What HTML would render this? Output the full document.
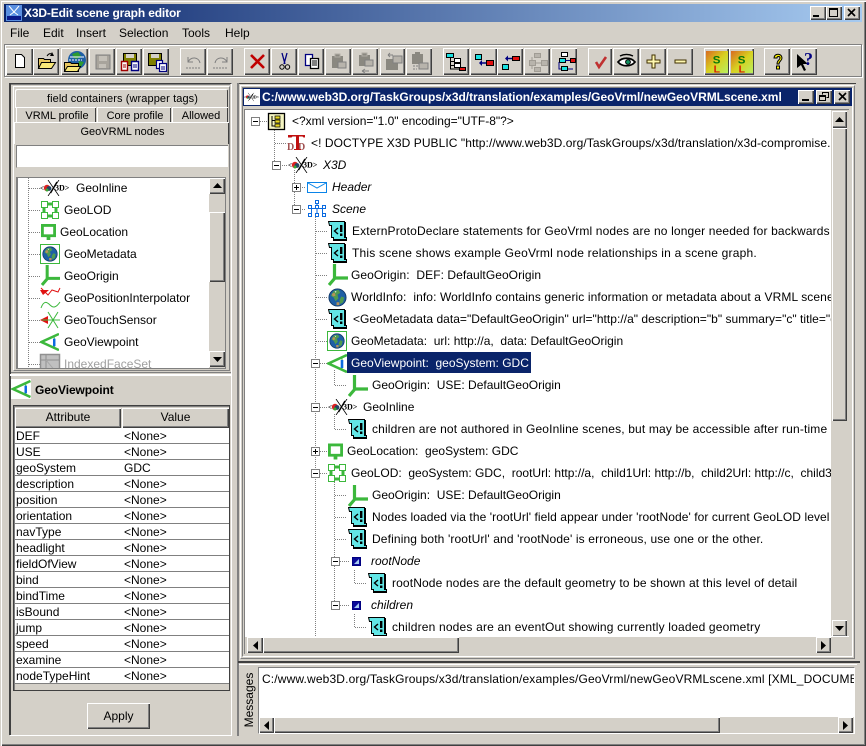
<!DOCTYPE html>
<html><head><meta charset="utf-8"><title>X3D-Edit scene graph editor</title>
<style>
html,body{margin:0;padding:0}
body{width:866px;height:746px;position:relative;overflow:hidden;background:#d4d0c8;font:12px "Liberation Sans",sans-serif;color:#000}
div,span,svg{position:absolute;box-sizing:border-box}
.t{white-space:pre;line-height:16px;height:16px}
.i{font-style:italic}
.b{top:48px;height:27px;background:#d4d0c8;box-shadow:inset 1px 1px #fff,inset -1px -1px #404040,inset -2px -2px #808080}
.b svg{left:2px;top:2px}
.r{background:#d4d0c8;box-shadow:inset 1px 1px #fff,inset -1px -1px #404040,inset -2px -2px #808080}
.m{top:25px}
.w{background:#fff}
.row{left:15px;width:214px;height:16px;background:#fff;border-bottom:1px solid #808080}
.row span{white-space:pre;line-height:15px;top:1px}
.row span+span{left:109px}
.row span:first-child{left:1px}
.tab{background:#d4d0c8;box-shadow:inset 1px 1px #fff,inset -1px 0 #404040;text-align:center;font-size:11px;line-height:16px;white-space:nowrap;overflow:hidden}
.tab span{left:2px;right:0}
</style></head><body>

<svg width="0" height="0" style="position:absolute">
<defs>
<symbol id="n" viewBox="0 0 20 20"><path d="M.5 .5H16.500V16.500H18.500V19.500H5.500V16.500H3.500V4.500H1.500L.5 .5Z" fill="#62e6e6" stroke="#000"/><path d="M16 1h2v16h-2zM6 18h13v2H6z" fill="#000"/><path d="M10 7L6.500 10 10 13" fill="none" stroke="#000" stroke-width="1.400"/><path d="M12 4h2.400v7H12zM12 12.500h2.400V15H12z" fill="#000"/></symbol>
<symbol id="o" viewBox="0 0 20 22"><path d="M6.500 0V14H20M7 14L1 21" fill="none" stroke="#3cb83c" stroke-width="3.200"/></symbol>
<symbol id="g" viewBox="0 0 20 20"><circle cx="10" cy="10" r="9" fill="#1f5fa5"/><path d="M6 3l5-1 2 3-3 2 1 4-3 3-2-4-3-2zM14 9l3 1-1 5-3 2-1-4z" fill="#4f9a50"/><path d="M4 6l3-1 1 3-3 1zM9 15l3 0 0 3-3 0z" fill="#b7935a"/><circle cx="10" cy="10" r="9" fill="none" stroke="#123a6a"/><path d="M7 3l2 1-1 1z" fill="#fff"/></symbol>
<symbol id="gm" viewBox="0 0 20 20"><rect x=".5" y=".5" width="19" height="19" fill="#fff" stroke="#3cb83c"/><use href="#g" x="2" y="2" width="16" height="16"/></symbol>
<symbol id="v" viewBox="0 0 20 19"><path d="M20 1L1.500 9.500 20 18" fill="none" stroke="#3cb83c" stroke-width="2.600"/><path d="M15 3v13" stroke="#3cb83c" stroke-width="1"/><path d="M15 6v8" stroke="#0a6ae0" stroke-width="2.600"/></symbol>
<symbol id="l" viewBox="0 0 18 18"><path d="M4 3H14M3 4V14M4 15H14M15 4V14" stroke="#3cb83c" stroke-width="3" fill="none"/><path d="M.5 .5h6v6h-6zM11.500 .5h6v6h-6zM.5 11.500h6v6h-6zM11.500 11.500h6v6h-6z" fill="#fff" stroke="#3cb83c"/></symbol>
<symbol id="c" viewBox="0 0 16 17"><path d="M0 0h16v14H10v3H6v-3H0z" fill="#3cb83c"/><path d="M3 3h10v8H3z" fill="#fff"/></symbol>
<symbol id="x" viewBox="0 0 31 16"><text x="0" y="10.500" font-family="Liberation Serif,serif" font-size="7" font-weight="bold">&lt;</text><circle cx="7" cy="8" r="3.200" fill="#d22"/><circle cx="9" cy="8.500" r="2.400" fill="#246"/><circle cx="7" cy="10" r="1.500" fill="#3a3"/><text x="15" y="10.500" font-family="Liberation Serif,serif" font-size="8" font-weight="bold">3D&gt;</text><path d="M8 0L19 16M19 0L8 16" stroke="#000" stroke-width=".8"/><path d="M17 2L10.500 13" stroke="#000" stroke-width="1.400"/></symbol>
<symbol id="sq" viewBox="0 0 9 9"><rect width="9" height="9" fill="#0a0a9a"/><path d="M2 7L7 2V7Z" fill="#a6caf0"/><rect x=".5" y=".5" width="8" height="8" fill="none" stroke="#000080"/></symbol>
<symbol id="mi" viewBox="0 0 9 9"><rect x=".5" y=".5" width="8" height="8" fill="#fff" stroke="#808080"/><path d="M2 4.500H7" stroke="#000" shape-rendering="crispEdges"/></symbol>
<symbol id="pl" viewBox="0 0 9 9"><rect x=".5" y=".5" width="8" height="8" fill="#fff" stroke="#808080"/><path d="M2 4.500H7M4.500 2V7" stroke="#000" shape-rendering="crispEdges"/></symbol>
<linearGradient id="slg" x1="0" y1="0" x2="1" y2="1"><stop offset="0" stop-color="#d86a20"/><stop offset=".5" stop-color="#d8d020"/><stop offset="1" stop-color="#b8f060"/></linearGradient>
<symbol id="ss" viewBox="0 0 23 23"><rect width="23" height="23" fill="url(#slg)"/><text x="7" y="13" font-family="Liberation Sans,sans-serif" font-weight="bold" font-size="12" fill="#087808">S</text><text x="8" y="22.500" font-family="Liberation Sans,sans-serif" font-weight="bold" font-size="11" fill="#d82000">L</text></symbol>
<symbol id="ar" viewBox="0 0 9 5"><path d="M4.500 0L9 5H0Z" fill="#000"/></symbol>
</defs></svg>

<!-- window frame -->
<div style="left:0;top:0;width:866px;height:746px;box-shadow:inset 1px 1px #d4d0c8,inset 2px 2px #fff,inset -1px -1px #404040,inset -2px -2px #808080"></div>

<!-- title bar -->
<div style="left:4px;top:4px;width:858px;height:18px;background:linear-gradient(90deg,#0a246a,#a6caf0)"></div>
<svg style="left:6px;top:5px" width="16" height="16" viewBox="0 0 16 16"><rect width="16" height="16" fill="#5a8fe0"/><path d="M3 1l5 6 5-6" stroke="#fff" fill="none"/><path d="M8 7L4 10M8 7l4 3" stroke="#fff"/><path d="M1 11h14v4H1z" fill="#0a1a8a"/></svg>
<div class="t" style="left:24px;top:5px;color:#fff;font-weight:bold;font-size:12px;letter-spacing:-.15px">X3D-Edit scene graph editor</div>
<div class="r" style="left:810px;top:6px;width:16px;height:14px"></div>
<div style="left:813px;top:15px;width:6px;height:2px;background:#000"></div>
<div class="r" style="left:826px;top:6px;width:16px;height:14px"></div>
<div style="left:829px;top:8px;width:9px;height:9px;border:1px solid #000;border-top-width:2px"></div>
<div class="r" style="left:844px;top:6px;width:16px;height:14px"></div>
<svg style="left:847px;top:8px" width="9" height="9"><path d="M1 1L8 8M8 1L1 8" stroke="#000" stroke-width="1.600"/></svg>

<!-- menu -->
<div class="t m" style="left:10px">File</div>
<div class="t m" style="left:43px">Edit</div>
<div class="t m" style="left:76px">Insert</div>
<div class="t m" style="left:119px">Selection</div>
<div class="t m" style="left:182px">Tools</div>
<div class="t m" style="left:225px">Help</div>

<!-- toolbar -->
<div style="left:4px;top:44px;width:858px;height:33px;border:1px solid #808080;box-shadow:inset 1px 1px #fff,1px 1px #fff"></div>

<div class="b" style="left:6px;width:27px"><svg width="23" height="23"><path d="M7.500 4.500h6l3 3v10h-9z" fill="#fff" stroke="#000"/></svg></div>
<div class="b" style="left:33px;width:26px"><svg width="23" height="23"><path d="M3.500 8.500h5l1 1h6v9h-12z" fill="#e8c860" stroke="#000"/><path d="M3.500 18.500l3-6h14l-4 6z" fill="#f8e878" stroke="#000"/><path d="M12 6c2-3 4-3 6-1" fill="none" stroke="#000"/><path d="M17 2l2 4-4 0" fill="#000"/></svg></div>
<div class="b" style="left:61px;width:27px"><svg width="24" height="24"><circle cx="14" cy="10" r="9" fill="#1f5fa5"/><path d="M9 4l6-2 3 4-4 3-3-1zM16 11l5 1-3 5-3-2z" fill="#2c9a30"/><path d="M7 7h14" stroke="#fff"/><path d="M6 10h13" stroke="#fff" stroke-dasharray="2 1"/><path d="M1.500 12.500h6l1 1h7v8h-14z" fill="#e8c860" stroke="#000"/><path d="M1.500 21.500l3-5h13l-3 5z" fill="#f8e878" stroke="#000"/></svg></div>
<div class="b" style="left:89px;width:26px"><svg width="23" height="23"><path d="M5 5h14v14H5z" fill="#a8a49c" stroke="#808080"/><path d="M8 6h8v5H8zM8 14h7v4H8z" fill="#c4c0b8"/></svg></div>
<div class="b" style="left:116px;width:26px"><svg width="24" height="24"><path d="M5.500 3.500h13v12h-13z" fill="#808000" stroke="#000"/><path d="M8 4h8v4H8z" fill="#d4d0c8"/><path d="M3.500 11.500h6v9h-6z" fill="#fff" stroke="#a00000" stroke-width="1.400"/><path d="M5 15h3M5 17h3" stroke="#a00000"/><path d="M13.500 11.500h7v9h-7z" fill="#fff" stroke="#000080" stroke-width="1.400"/><path d="M15 15h4M15 17h4" stroke="#000080"/></svg></div>
<div class="b" style="left:143px;width:26px"><svg width="24" height="24"><path d="M3.500 3.500h13v12h-13z" fill="#808000" stroke="#000"/><path d="M6 4h8v4H6z" fill="#d4d0c8"/><path d="M11.500 10.500h6v8h-6z" fill="#fff" stroke="#000080" stroke-width="1.200"/><path d="M14.500 13.500h7v8h-7z" fill="#fff" stroke="#000080" stroke-width="1.200"/><path d="M16 17h4M16 19h4" stroke="#000080"/></svg></div>

<div class="b" style="left:180px;width:26px"><svg width="23" height="23" fill="none" stroke="#808080"><path d="M6 7v5h5"/><path d="M6 12c3-6 11-5 12 1"/><path d="M4 18h15" stroke-dasharray="2 1"/></svg></div>
<div class="b" style="left:207px;width:26px"><svg width="23" height="23" fill="none" stroke="#808080"><path d="M18 7v5h-5"/><path d="M18 12c-3-6-11-5-12 1"/><path d="M4 18h15" stroke-dasharray="2 1"/></svg></div>

<div class="b" style="left:244px;width:26px"><svg width="23" height="23"><path d="M5 5L18 18M18 5L5 18" stroke="#c00000" stroke-width="2.600"/></svg></div>
<div class="b" style="left:271px;width:26px"><svg width="23" height="23" fill="none" stroke="#000"><path d="M9 3l3 11M14 3l-3 11" stroke="#000080" stroke-width="1.300"/><circle cx="9" cy="17" r="2.200"/><circle cx="14.500" cy="17" r="2.200"/></svg></div>
<div class="b" style="left:298px;width:26px"><svg width="23" height="23"><path d="M5.500 4.500h7v11h-7z" fill="#fff" stroke="#000080" stroke-width="1.300"/><path d="M10.500 8.500h8v10h-8z" fill="#fff" stroke="#000" stroke-width="1.300"/><path d="M12 11h5M12 13h5M12 15h5" stroke="#000"/></svg></div>
<div class="b" style="left:325px;width:26px"><svg width="23" height="23"><path d="M5 6h11v12H5z" fill="#8a8880"/><path d="M8 4h5v3H8z" fill="#8a8880" stroke="#b0aca4"/><path d="M11 12h8v6h-8z" fill="#b8b4ac" stroke="#808080"/></svg></div>
<div class="b" style="left:352px;width:26px"><svg width="23" height="23"><path d="M5 5h11v11H5z" fill="#8a8880"/><path d="M8 3h5v3H8z" fill="#8a8880" stroke="#b0aca4"/><path d="M11 10h8v6h-8z" fill="#b8b4ac" stroke="#808080"/><path d="M8 21h7M8 21l3-2M8 21l3 2" stroke="#808080" fill="none"/></svg></div>
<div class="b" style="left:380px;width:25px"><svg width="23" height="23"><path d="M4 9h12v11H4z" fill="#8a8880"/><path d="M11 6h9v7h-9z" fill="#b8b4ac" stroke="#808080"/><path d="M6 5h5M6 5l2-2M6 5l2 2" stroke="#808080" fill="none"/></svg></div>
<div class="b" style="left:406px;width:26px"><svg width="23" height="23"><path d="M4 4h11v10H4z" fill="#8a8880"/><path d="M7 2h5v3H7z" fill="#8a8880"/><path d="M11 13h9v6h-9z" fill="#b8b4ac" stroke="#808080"/><path d="M5 16h5M5 19h4" stroke="#808080" stroke-dasharray="2 1"/></svg></div>

<div class="b" style="left:443px;width:26px"><svg width="23" height="23" stroke="#000"><path d="M5.500 7v12h9M5.500 11.500h5M5.500 15.500h5" fill="none"/><path d="M1.500 3.500h7v4h-7z" fill="#19e0e0"/><path d="M9.500 8.500h6v4h-6zM9.500 13.500h6v4h-6z" fill="#fff"/><path d="M14.500 17.500h6v3h-6z" fill="#e01010"/></svg></div>
<div class="b" style="left:470px;width:27px"><svg width="24" height="23" stroke="#000"><path d="M3.500 4.500h6v5h-6z" fill="#19e0e0"/><path d="M14.500 10.500h7v5h-7z" fill="#e01010"/><path d="M8 13h6" stroke="#000080" stroke-width="1.500"/><path d="M7 13l3-3v6z" fill="#000080" stroke="none"/></svg></div>
<div class="b" style="left:497px;width:26px"><svg width="23" height="23" stroke="#000"><path d="M3.500 14.500h6v5h-6z" fill="#19e0e0"/><path d="M13.500 6.500h7v4h-7z" fill="#e01010"/><path d="M7 8.500h6" stroke="#000080" stroke-width="1.500"/><path d="M6 8.500l3-3v6z" fill="#000080" stroke="none"/></svg></div>
<div class="b" style="left:524px;width:26px"><svg width="23" height="23" stroke="#a09c94"><path d="M8.500 3.500h6v4h-6zM3.500 10.500h6v5h-6zM15.500 10.500h6v5h-6zM8.500 17.500h6v4h-6z" fill="#b8b4ac"/><path d="M9 13h6M6 7V10M6 16v3" fill="none"/></svg></div>
<div class="b" style="left:551px;width:26px"><svg width="24" height="24" stroke="#000"><path d="M8.500 2.500h6v4h-6z" fill="#fff"/><path d="M6.500 8.500h6v4h-6z" fill="#19e0e0"/><path d="M8.500 16.500h6v4h-6z" fill="#19e0e0"/><path d="M17.500 8.500h5v4h-5z" fill="#e01010"/><path d="M12 10.500h5M6 12v7h2M15 19h5" stroke="#000080" fill="none"/></svg></div>

<div class="b" style="left:588px;width:24px"><svg width="22" height="23" fill="none"><path d="M6 12l3 5 7-10" stroke="#c03030" stroke-width="2.600"/></svg></div>
<div class="b" style="left:613px;width:26px"><svg width="23" height="23"><path d="M3 12c4-5 13-5 17 0-4 5-13 5-17 0z" fill="#fff" stroke="#000" stroke-width="1.800"/><circle cx="13" cy="12" r="2.400" fill="#109060" stroke="#000"/><path d="M5 6c4-2 9-2 13 0" fill="none" stroke="#000" stroke-width="1.400"/></svg></div>
<div class="b" style="left:640px;width:26px"><svg width="23" height="23"><path d="M10 5h3v5h5v3h-5v5h-3v-5H5v-3h5z" fill="#fff8b0" stroke="#403000"/></svg></div>
<div class="b" style="left:667px;width:26px"><svg width="23" height="23"><path d="M6 10h11v3H6z" fill="#fff8b0" stroke="#403000"/></svg></div>

<div class="b" style="left:704px;width:25px"><svg width="23" height="23"><use href="#ss" width="22" height="22" x="0" y="1"/></svg></div>
<div class="b" style="left:729px;width:25px"><svg width="23" height="23"><use href="#ss" width="22" height="22" x="0" y="1"/></svg></div>
<div class="b" style="left:764px;width:26px"><svg width="23" height="23"><path d="M8 8c0-5 8-5 8 0 0 3-3 3-3 6h-2c0-4 3-4 3-6s-3-2-3 0z" fill="#f8f000" stroke="#000"/><rect x="10.500" y="16" width="3" height="3" fill="#f8f000" stroke="#000"/></svg></div>
<div class="b" style="left:791px;width:26px"><svg width="23" height="23"><path d="M4 4v14l4-3 3 6 2-1-3-6h5z" fill="#000"/><text x="11" y="15" font-family="Liberation Serif,serif" font-weight="bold" font-size="18" fill="#000080">?</text></svg></div>

<!-- left panel -->
<div style="left:9px;top:83px;width:223px;height:290px;border:1px solid #404040;border-right-color:#fff;border-bottom-color:#808080"></div>
<div style="left:9px;top:83px;width:2px;height:652px;background:#404040"></div>
<div style="left:10px;top:735px;width:222px;height:1px;background:#fff"></div>
<div style="left:231px;top:84px;width:1px;height:652px;background:#fff"></div>
<div style="left:11px;top:84px;width:219px;height:1px;background:#808080"></div>
<div style="left:13px;top:86px;width:217px;height:285px;border:1px solid #fff;border-right-color:#808080;border-bottom-color:#808080"></div>

<!-- tabs -->
<div class="tab" style="left:15px;top:89px;width:213px;height:19px;border-radius:2px 2px 0 0"><span style="top:2px;letter-spacing:.1px">field containers (wrapper tags)</span></div>
<div class="tab" style="left:16px;top:107px;width:80px;height:16px;"><span style="top:1px">VRML profile</span></div>
<div class="tab" style="left:97px;top:107px;width:74px;height:16px;"><span style="top:1px">Core profile</span></div>
<div class="tab" style="left:172px;top:107px;width:56px;height:16px;"><span style="top:1px">Allowed</span></div>
<div class="tab" style="left:14px;top:122px;width:215px;height:22px;"><span style="top:2px">GeoVRML nodes</span></div>
<div class="w" style="left:16px;top:145px;width:212px;height:23px;border:1px solid #808080;border-right:0;border-bottom-color:#d4d0c8"></div>

<!-- list -->
<div class="w" style="left:16px;top:177px;width:210px;height:192px;border:1px solid #808080"></div>
<div style="left:17px;top:177px;width:1px;height:192px;background:#808080"></div>
<div style="left:0;top:0;width:209px;height:368px;clip-path:inset(178px 0 0 19px)">
<svg style="left:0;top:0" width="209" height="380">
<path d="M28.500 178V368" stroke="#808080" stroke-dasharray="1 1"/>
<path d="M29 188.500H40M29 210.500H40M29 232.500H40M29 254.500H40M29 276.500H40M29 298.500H40M29 320.500H40M29 342.500H40M29 364.500H40" stroke="#808080" stroke-dasharray="1 1"/>
<use href="#x" x="40" y="180" width="31" height="16"/>
<use href="#l" x="41" y="201" width="18" height="18"/>
<use href="#c" x="41" y="224" width="15" height="16"/>
<use href="#gm" x="40" y="244" width="20" height="20"/>
<use href="#o" x="41" y="265" width="19" height="21"/>
<path d="M41 288L48 295 52 290 58 292 60 288" fill="none" stroke="#e01010"/><path d="M40 290h9l-6 5z" fill="#e01010"/><path d="M41 308c3-8 6-6 9-3s6 3 10-3" fill="none" stroke="#3cb83c"/>
<path d="M40 320l8-4v8z" fill="#e01010"/><path d="M42 320H60M48 312L58 328M58 312L48 328" stroke="#3cb83c"/>
<use href="#v" x="40" y="333" width="19" height="18"/>
<rect x="40.500" y="354.500" width="19" height="19" fill="#c0c0c0" stroke="#909090" stroke-width="1.500"/><path d="M41 360H59M46 355V373" stroke="#909090"/><path d="M46 360L56 372" stroke="#a8a8a8"/>
</svg>
<div class="t" style="left:76px;top:180px">GeoInline</div>
<div class="t" style="left:64px;top:202px">GeoLOD</div>
<div class="t" style="left:60px;top:224px">GeoLocation</div>
<div class="t" style="left:64px;top:246px">GeoMetadata</div>
<div class="t" style="left:64px;top:268px">GeoOrigin</div>
<div class="t" style="left:64px;top:290px">GeoPositionInterpolator</div>
<div class="t" style="left:64px;top:312px">GeoTouchSensor</div>
<div class="t" style="left:64px;top:334px">GeoViewpoint</div>
<div class="t" style="left:64px;top:356px;color:#a0a0a0">IndexedFaceSet</div>
</div>
<!-- list scrollbar -->
<div style="left:209px;top:178px;width:16px;height:190px;background:#d4d0c8"></div>
<div class="r" style="left:209px;top:178px;width:16px;height:16px"></div><svg style="left:213px;top:183px" width="9" height="5"><use href="#ar" width="9" height="5"/></svg>
<div class="r" style="left:209px;top:212px;width:16px;height:70px"></div>
<div class="r" style="left:209px;top:351px;width:16px;height:16px"></div><svg style="left:213px;top:357px" width="9" height="5" viewBox="0 0 9 5"><path d="M0 0H9L4.500 5Z"/></svg>

<!-- divider -->
<div style="left:10px;top:374px;width:222px;height:2px;background:#fff"></div>
<div style="left:11px;top:379px;width:20px;height:20px;background:#fff"></div>
<svg style="left:11px;top:380px" width="20" height="18"><use href="#v" width="20" height="18"/></svg>
<div class="t" style="left:35px;top:382px;font-weight:bold;letter-spacing:-.1px">GeoViewpoint</div>

<!-- attr table -->
<div style="left:13px;top:405px;width:217px;height:286px;border:1px solid #404040;background:#d4d0c8;box-shadow:inset 1px 1px #808080"></div>
<div class="r" style="left:15px;top:408px;width:106px;height:20px;text-align:center;line-height:19px">Attribute</div>
<div class="r" style="left:122px;top:408px;width:107px;height:20px;text-align:center;line-height:19px">Value</div>
<div class="row" style="top:428px"><span>DEF</span><span>&lt;None&gt;</span></div>
<div class="row" style="top:444px"><span>USE</span><span>&lt;None&gt;</span></div>
<div class="row" style="top:460px"><span>geoSystem</span><span>GDC</span></div>
<div class="row" style="top:476px"><span>description</span><span>&lt;None&gt;</span></div>
<div class="row" style="top:492px"><span>position</span><span>&lt;None&gt;</span></div>
<div class="row" style="top:508px"><span>orientation</span><span>&lt;None&gt;</span></div>
<div class="row" style="top:524px"><span>navType</span><span>&lt;None&gt;</span></div>
<div class="row" style="top:540px"><span>headlight</span><span>&lt;None&gt;</span></div>
<div class="row" style="top:556px"><span>fieldOfView</span><span>&lt;None&gt;</span></div>
<div class="row" style="top:572px"><span>bind</span><span>&lt;None&gt;</span></div>
<div class="row" style="top:588px"><span>bindTime</span><span>&lt;None&gt;</span></div>
<div class="row" style="top:604px"><span>isBound</span><span>&lt;None&gt;</span></div>
<div class="row" style="top:620px"><span>jump</span><span>&lt;None&gt;</span></div>
<div class="row" style="top:636px"><span>speed</span><span>&lt;None&gt;</span></div>
<div class="row" style="top:652px"><span>examine</span><span>&lt;None&gt;</span></div>
<div class="row" style="top:668px"><span>nodeTypeHint</span><span>&lt;None&gt;</span></div>

<div class="r" style="left:87px;top:703px;width:63px;height:26px;text-align:center;line-height:26px">Apply</div>

<!-- right frame -->
<div style="left:237px;top:83px;width:2px;height:653px;background:#808080"></div>
<div style="left:239px;top:83px;width:617px;height:1px;background:#404040"></div>
<div style="left:240px;top:85px;width:615px;height:574px;border:1px solid #fff;border-right-color:#808080;border-bottom-color:#808080"></div>
<div style="left:242px;top:87px;width:611px;height:570px;border:1px solid #808080;border-right-color:#fff;border-bottom-color:#fff"></div>
<div style="left:243px;top:88px;width:609px;height:18px;background:#0a246a"></div>
<svg style="left:244px;top:89px" width="16" height="16"><rect width="16" height="16" fill="#fff"/><use href="#x" x="0" y="2" width="16" height="12"/></svg>
<div class="t" style="left:262px;top:89px;color:#fff;font-weight:bold;letter-spacing:-.03px">C:/www.web3D.org/TaskGroups/x3d/translation/examples/GeoVrml/newGeoVRMLscene.xml</div>
<div class="r" style="left:798px;top:90px;width:16px;height:14px"></div>
<div style="left:802px;top:99px;width:7px;height:2px;background:#000"></div>
<div class="r" style="left:816px;top:90px;width:16px;height:14px"></div>
<svg style="left:819px;top:92px" width="10" height="10" fill="none" stroke="#000"><path d="M3.500 2.500v-2h6v5h-2"/><path d="M.5 3.500h6v5h-6z"/><path d="M.5 4.500h6"/></svg>
<div class="r" style="left:834px;top:90px;width:16px;height:14px"></div>
<svg style="left:838px;top:92px" width="9" height="9"><path d="M1 1L8 8M8 1L1 8" stroke="#000" stroke-width="1.600"/></svg>

<div class="w" style="left:245px;top:110px;width:586px;height:526px"></div>
<div style="left:244px;top:109px;width:605px;height:1px;background:#808080"></div>
<div style="left:244px;top:109px;width:1px;height:545px;background:#808080"></div>

<div style="left:0;top:0;width:831px;height:636px;clip-path:inset(110px 0 0 245px)">
<svg style="left:0;top:0" width="831" height="660">
<g fill="none" stroke="#808080" stroke-dasharray="1 1">
<path d="M260 121.500H267M274.500 126V162M275 143.500H287M280 165.500H287M294.500 170V205M300 187.500H306M300 209.500H306"/>
<path d="M315.500 215V640M316 231.500H327M316 253.500H327M316 275.500H327M316 297.500H327M316 319.500H327M316 341.500H327M320 363.500H327M320 407.500H327M320 451.500H327M320 473.500H327"/>
<path d="M334.500 370V385.500H347M334.500 414V429.500H347M334.500 480V605M335 495.500H347M335 517.500H347M335 539.500H347"/>
<path d="M340 561.500H350M340 605.500H350M354.500 570V583.500H367M354.500 614V627.500H367"/>
</g>
<use href="#mi" x="251" y="117" width="9" height="9"/>
<rect x="268.500" y="113.500" width="16" height="16" fill="#f4f4c0" stroke="#000" stroke-width="1.300"/><path d="M272 116v10h3M272 120.500h3" fill="none" stroke="#000"/><path d="M275 116h5v3h-5zM275 120h5v3h-5zM275 124h5v3h-5z" fill="#e8d820" stroke="#000" stroke-width=".7"/>
<text x="287" y="150" font-family="Liberation Serif,serif" font-weight="bold" font-size="10" fill="#a05050">D</text><text x="298" y="150" font-family="Liberation Serif,serif" font-weight="bold" font-size="10" fill="#a05050">D</text>
<path d="M288 135h17v2.500h-1.500l-1-1h-3.500V149h2v1h-7v-1h2V136.500h-3.500l-1 1H288z" fill="#c01010"/>
<use href="#mi" x="272" y="161" width="9" height="9"/>
<use href="#x" x="288" y="157" width="31" height="16"/>
<use href="#pl" x="292" y="183" width="9" height="9"/>
<path d="M307.500 182.500h19v10h-19z" fill="#fff" stroke="#0a84e8"/><path d="M308 183l9 5 9-5" fill="none" stroke="#0a84e8"/>
<use href="#mi" x="292" y="205" width="9" height="9"/>
<g fill="#fff" stroke="#0a6ae0"><path d="M317 204v10M311 208.500H323M311.500 209v5M322.500 209v5" fill="none"/><rect x="315.500" y="200.500" width="3" height="3"/><rect x="308.500" y="205.500" width="3" height="3"/><rect x="315.500" y="205.500" width="3" height="3"/><rect x="322.500" y="205.500" width="3" height="3"/><rect x="308.500" y="213.500" width="3" height="3"/><rect x="315.500" y="213.500" width="3" height="3"/><rect x="322.500" y="213.500" width="3" height="3"/></g>
<use href="#n" x="328" y="221" width="20" height="20"/>
<use href="#n" x="328" y="243" width="20" height="20"/>
<use href="#o" x="328" y="264" width="20" height="22"/>
<use href="#g" x="328" y="288" width="19" height="19"/>
<use href="#n" x="328" y="309" width="20" height="20"/>
<use href="#gm" x="327" y="331" width="20" height="20"/>
<use href="#mi" x="311" y="359" width="9" height="9"/>
<use href="#v" x="327" y="354" width="20" height="19"/>
<use href="#o" x="348" y="375" width="20" height="22"/>
<use href="#mi" x="311" y="403" width="9" height="9"/>
<use href="#x" x="328" y="399" width="31" height="16"/>
<use href="#n" x="348" y="419" width="20" height="20"/>
<use href="#pl" x="311" y="447" width="9" height="9"/>
<use href="#c" x="328" y="443" width="15" height="17"/>
<use href="#mi" x="311" y="469" width="9" height="9"/>
<use href="#l" x="328" y="464" width="18" height="18"/>
<use href="#o" x="348" y="485" width="20" height="22"/>
<use href="#n" x="348" y="507" width="20" height="20"/>
<use href="#n" x="348" y="529" width="20" height="20"/>
<use href="#mi" x="331" y="557" width="9" height="9"/>
<use href="#sq" x="352" y="557" width="9" height="9"/>
<use href="#n" x="368" y="573" width="20" height="20"/>
<use href="#mi" x="331" y="601" width="9" height="9"/>
<use href="#sq" x="352" y="601" width="9" height="9"/>
<use href="#n" x="368" y="617" width="20" height="20"/>
</svg>
<div class="t" style="left:292px;top:113px">&lt;?xml version="1.0" encoding="UTF-8"?&gt;</div>
<div class="t" style="left:311px;top:135px;letter-spacing:.07px">&lt;! DOCTYPE X3D PUBLIC "http://www.web3D.org/TaskGroups/x3d/translation/x3d-compromise.</div>
<div class="t i" style="left:323px;top:157px">X3D</div>
<div class="t i" style="left:332px;top:179px">Header</div>
<div class="t i" style="left:332px;top:201px">Scene</div>
<div class="t" style="left:352px;top:223px;letter-spacing:.146px">ExternProtoDeclare statements for GeoVrml nodes are no longer needed for backwards</div>
<div class="t" style="left:352px;top:245px;letter-spacing:.21px">This scene shows example GeoVrml node relationships in a scene graph.</div>
<div class="t" style="left:351px;top:267px;letter-spacing:.06px">GeoOrigin:  DEF: DefaultGeoOrigin</div>
<div class="t" style="left:351px;top:289px;letter-spacing:.1px">WorldInfo:  info: WorldInfo contains generic information or metadata about a VRML scene</div>
<div class="t" style="left:353px;top:311px;letter-spacing:.03px">&lt;GeoMetadata data="DefaultGeoOrigin" url="http://a" description="b" summary="c" title="d"</div>
<div class="t" style="left:351px;top:333px">GeoMetadata:  url: http://a,  data: DefaultGeoOrigin</div>
<div style="left:347px;top:352px;width:184px;height:21px;background:#0a246a"></div>
<div class="t" style="left:351px;top:355px;color:#fff">GeoViewpoint:  geoSystem: GDC</div>
<div class="t" style="left:372px;top:377px">GeoOrigin:  USE: DefaultGeoOrigin</div>
<div class="t" style="left:363px;top:399px">GeoInline</div>
<div class="t" style="left:372px;top:421px;letter-spacing:.157px">children are not authored in GeoInline scenes, but may be accessible after run-time</div>
<div class="t" style="left:347px;top:443px">GeoLocation:  geoSystem: GDC</div>
<div class="t" style="left:351px;top:465px">GeoLOD:  geoSystem: GDC,  rootUrl: http://a,  child1Url: http://b,  child2Url: http://c,  child3Url</div>
<div class="t" style="left:372px;top:487px">GeoOrigin:  USE: DefaultGeoOrigin</div>
<div class="t" style="left:372px;top:509px;letter-spacing:.08px">Nodes loaded via the 'rootUrl' field appear under 'rootNode' for current GeoLOD level</div>
<div class="t" style="left:372px;top:531px;letter-spacing:.135px">Defining both 'rootUrl' and 'rootNode' is erroneous, use one or the other.</div>
<div class="t i" style="left:371px;top:553px">rootNode</div>
<div class="t" style="left:392px;top:575px;letter-spacing:.13px">rootNode nodes are the default geometry to be shown at this level of detail</div>
<div class="t i" style="left:371px;top:597px">children</div>
<div class="t" style="left:392px;top:619px;letter-spacing:.18px">children nodes are an eventOut showing currently loaded geometry</div>
</div>

<!-- tree v scrollbar -->
<div style="left:831px;top:110px;width:17px;height:526px;background:#d4d0c8"></div>
<div class="r" style="left:832px;top:111px;width:15px;height:17px"></div><svg style="left:835px;top:117px" width="9" height="5"><use href="#ar" width="9" height="5"/></svg>
<div class="r" style="left:832px;top:128px;width:15px;height:293px"></div>
<div class="r" style="left:832px;top:620px;width:15px;height:17px"></div><svg style="left:835px;top:626px" width="9" height="5" viewBox="0 0 9 5"><path d="M0 0H9L4.500 5Z"/></svg>
<!-- tree h scrollbar -->
<div style="left:245px;top:636px;width:604px;height:18px;background:#d4d0c8;border-top:1px solid #fff"></div>
<div class="r" style="left:247px;top:637px;width:16px;height:16px"></div><svg style="left:253px;top:641px" width="5" height="9" viewBox="0 0 5 9"><path d="M5 0V9L0 4.500Z"/></svg>
<div class="r" style="left:263px;top:637px;width:196px;height:16px"></div>
<div class="r" style="left:816px;top:637px;width:15px;height:16px"></div><svg style="left:821px;top:641px" width="5" height="9" viewBox="0 0 5 9"><path d="M0 0V9L5 4.500Z"/></svg>

<!-- messages -->
<div style="left:238px;top:661px;width:622px;height:2px;background:#404040"></div>
<div style="left:239px;top:664px;width:618px;height:1px;background:#fff"></div>
<div class="t" style="left:212px;top:692px;width:74px;height:16px;transform:rotate(-90deg);text-align:center">Messages</div>
<div class="w" style="left:258px;top:667px;width:597px;height:67px;border:1px solid #808080;border-right-color:#fff;border-bottom-color:#fff"></div>
<div style="left:259px;top:668px;width:595px;height:49px;overflow:hidden"><div class="t" style="left:3px;top:3px;letter-spacing:.145px">C:/www.web3D.org/TaskGroups/x3d/translation/examples/GeoVrml/newGeoVRMLscene.xml [XML_DOCUMENT]</div></div>
<div style="left:259px;top:717px;width:595px;height:16px;background:#d4d0c8"></div>
<div class="r" style="left:259px;top:717px;width:15px;height:16px"></div><svg style="left:264px;top:721px" width="5" height="9" viewBox="0 0 5 9"><path d="M5 0V9L0 4.500Z"/></svg>
<div class="r" style="left:274px;top:717px;width:446px;height:16px"></div>
<div class="r" style="left:838px;top:717px;width:15px;height:16px"></div><svg style="left:843px;top:721px" width="5" height="9" viewBox="0 0 5 9"><path d="M0 0V9L5 4.500Z"/></svg>
</body></html>
